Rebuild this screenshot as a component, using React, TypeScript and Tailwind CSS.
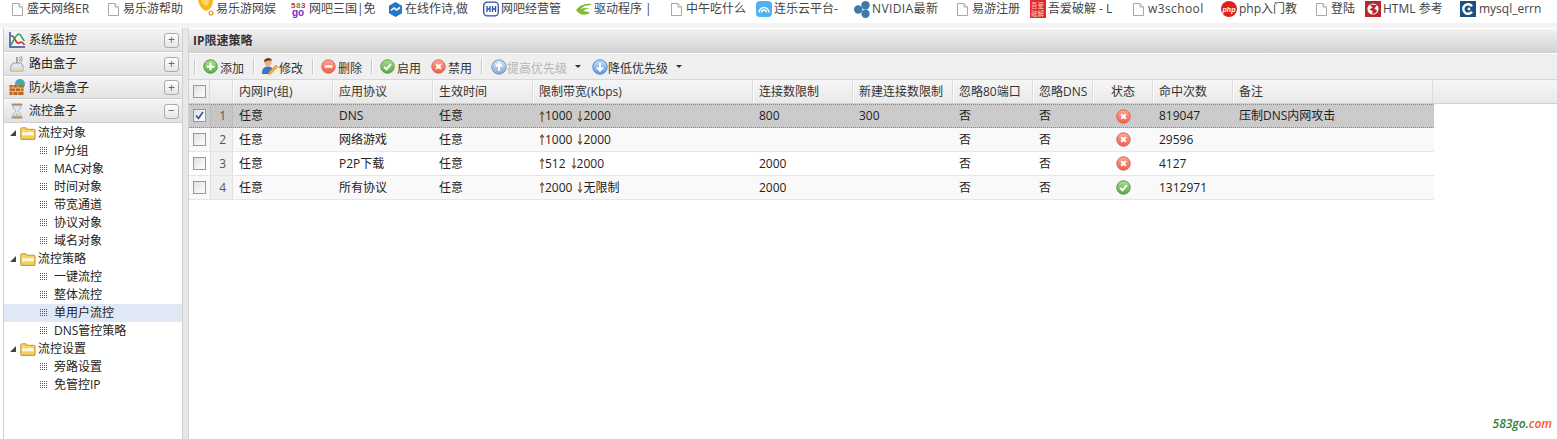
import React from "react";

const FONT = "font-['Open_Sans','Noto_Sans_CJK_SC',sans-serif]";

function Doc() {
  return (
    <svg width="13" height="14" viewBox="0 0 13 14" className="shrink-0">
      <path d="M0.5 1.5H7L10.5 5V13.5H0.5Z" fill="#fff" stroke="#a8a8a8" />
      <path d="M7 1.5V5H10.5" fill="#eee" stroke="#a8a8a8" />
    </svg>
  );
}

function Bell() {
  return (
    <svg width="16" height="16" viewBox="0 0 16 16" className="shrink-0 -mt-[2px]">
      <path d="M0 0H15C15 5 13 9 8 11C5 10 1 6 0 0Z" fill="#f5b81f" />
      <path d="M3 0H11C11 3 10 5 8 6C6 5 4 3 3 0Z" fill="#fbd964" />
      <circle cx="13" cy="13" r="2" fill="#fff" stroke="#e9962a" strokeWidth="1.2" />
    </svg>
  );
}

function Go583() {
  return (
    <svg width="16" height="18" viewBox="0 0 16 18" className="shrink-0">
      <text x="0" y="7.5" fontSize="8" fontFamily="Liberation Sans" fontWeight="700" fill="#e8212a">5</text>
      <text x="5" y="7.5" fontSize="8" fontFamily="Liberation Sans" fontWeight="700" fill="#38a838">8</text>
      <text x="10" y="7.5" fontSize="8" fontFamily="Liberation Sans" fontWeight="700" fill="#e8212a">3</text>
      <text x="1" y="15.5" fontSize="10" fontFamily="Liberation Sans" fontWeight="700" fill="#7a2bd0">go</text>
    </svg>
  );
}

function Diamond() {
  return (
    <svg width="15" height="15" viewBox="0 0 15 15" className="shrink-0">
      <path d="M7.5 0L14 3.7V11.3L7.5 15L1 11.3V3.7Z" fill="#2078c8" />
      <path d="M3 8.5L6 6L8.5 8L12 5.5" fill="none" stroke="#fff" strokeWidth="1.6" />
    </svg>
  );
}

function HH() {
  return (
    <svg width="16" height="16" viewBox="0 0 16 16" className="shrink-0">
      <rect x="0.7" y="1.2" width="14.6" height="13.6" rx="3.5" fill="#fff" stroke="#2f4fa8" strokeWidth="1.3" />
      <path d="M4 5V11M7 5V11M9.5 5V11M12.5 5V11M4 8H7M9.5 8H12.5" stroke="#2f4fa8" strokeWidth="1.3" />
    </svg>
  );
}

function Nvidia() {
  return (
    <svg width="16" height="14" viewBox="0 0 16 14" className="shrink-0">
      <path d="M0 8C4 3 9 1 16 2L13 3.5C9 3 6 5 4.5 8C6.5 6 10 5 13 6.5C10 6.5 8 8 7 9.5C9 9 12 9.5 14 11C9 14 3 13 0 8Z" fill="#84bc30" />
    </svg>
  );
}

function Cloud() {
  return (
    <svg width="16" height="16" viewBox="0 0 16 16" className="shrink-0">
      <rect width="16" height="16" rx="4" fill="#4db2ee" />
      <path d="M3 11.5A5 5 0 0 1 13 11.5" fill="none" stroke="#fff" strokeWidth="1.5" />
      <path d="M5.5 11.5A2.5 2.5 0 0 1 10.5 11.5" fill="none" stroke="#fff" strokeWidth="1.5" />
    </svg>
  );
}

function Hex() {
  return (
    <svg width="16" height="17" viewBox="0 0 16 17" className="shrink-0">
      <circle cx="4.2" cy="8.5" r="4.2" fill="#3d7aa8" />
      <circle cx="11.5" cy="4.2" r="4.2" fill="#3d7aa8" />
      <circle cx="11.5" cy="12.8" r="4.2" fill="#3d7aa8" />
    </svg>
  );
}

function Red52() {
  return (
    <svg width="16" height="18" viewBox="0 0 16 18" className="shrink-0">
      <rect width="16" height="18" fill="#e4282c" />
      <text x="1" y="7.5" fontSize="6.5" fontFamily="Noto Sans CJK SC" fill="#fbc8c0">吾爱</text>
      <text x="1" y="15.5" fontSize="6.5" fontFamily="Noto Sans CJK SC" fill="#fbc8c0">破解</text>
    </svg>
  );
}

function Php() {
  return (
    <svg width="16" height="16" viewBox="0 0 16 16" className="shrink-0">
      <circle cx="8" cy="8" r="8" fill="#e02020" />
      <text x="1.6" y="10.5" fontSize="7" fontStyle="italic" fontWeight="700" fontFamily="Liberation Sans" fill="#fff">php</text>
    </svg>
  );
}

function HtmlLogo() {
  return (
    <svg width="16" height="16" viewBox="0 0 16 16" className="shrink-0">
      <rect width="16" height="16" fill="#b9272c" />
      <circle cx="8" cy="8" r="5.6" fill="#fff" />
      <path d="M4.5 3.5L12 4L9.5 7.5L12 9.5C12 12 9 13 6.5 12.5L8 10.5L4.5 8.5L7.5 6.5Z" fill="#b9272c" />
    </svg>
  );
}

function MysqlLogo() {
  return (
    <svg width="16" height="16" viewBox="0 0 16 16" className="shrink-0">
      <rect width="16" height="16" fill="#1d4f80" />
      <path d="M12 5.2A4.8 4.8 0 1 0 12 10.8" fill="none" stroke="#fff" strokeWidth="2.4" />
      <circle cx="9" cy="8" r="1.4" fill="#fff" />
    </svg>
  );
}

const marks = [
  { w: "w-[96px]", g: "gap-[2px]", c: "", i: <Doc />, t: "盛天网络ER" },
  { w: "w-[90px]", g: "gap-[2px]", c: "", i: <Doc />, t: "易乐游帮助" },
  { w: "w-[93px]", g: "gap-[2px]", c: "", i: <Bell />, t: "易乐游网娱" },
  { w: "w-[97px]", g: "gap-[2px]", c: "", i: <Go583 />, t: "网吧三国|免" },
  { w: "w-[95px]", g: "gap-[2px]", c: "", i: <Diamond />, t: "在线作诗,做" },
  { w: "w-[93px]", g: "gap-[2px]", c: "", i: <HH />, t: "网吧经营管" },
  { w: "w-[95px]", g: "gap-[2px]", c: "", i: <Nvidia />, t: "驱动程序 |" },
  { w: "w-[85px]", g: "gap-[2px]", c: "", i: <Doc />, t: "中午吃什么" },
  { w: "w-[98px]", g: "gap-[2px]", c: "", i: <Cloud />, t: "连乐云平台-" },
  { w: "w-[103px]", g: "gap-[2px]", c: "tracking-[0.4px]", i: <Hex />, t: "NVIDIA最新" },
  { w: "w-[73px]", g: "gap-[2px]", c: "", i: <Doc />, t: "易游注册" },
  { w: "w-[103px]", g: "gap-[2px]", c: "", i: <Red52 />, t: "吾爱破解 - L" },
  { w: "w-[88px]", g: "gap-[2px]", c: "tracking-[0.4px]", i: <Doc />, t: "w3school" },
  { w: "w-[95px]", g: "gap-[2px]", c: "", i: <Php />, t: "php入门教" },
  { w: "w-[49px]", g: "gap-[2px]", c: "", i: <Doc />, t: "登陆" },
  { w: "w-[95px]", g: "gap-[2px]", c: "", i: <HtmlLogo />, t: "HTML 参考" },
  { w: "w-[90px]", g: "gap-[3px]", c: "", i: <MysqlLogo />, t: "mysql_errn" },
];

function Chart() {
  return (
    <svg width="16" height="16" viewBox="0 0 16 16">
      <rect x="1" y="0" width="15" height="15" fill="#eef6fb" />
      <path d="M1 0V15H16" fill="none" stroke="#2f50a0" strokeWidth="1.5" />
      <path d="M2 4C5 2 7 13 10 11C12 10 13 9 15.5 13" fill="none" stroke="#e02828" strokeWidth="1.6" />
      <path d="M2 13C5 8 7 2 10 2C12 2 13 7 15.5 9" fill="none" stroke="#2f9e3a" strokeWidth="1.5" />
    </svg>
  );
}
function Router() {
  return (
    <svg width="16" height="17" viewBox="0 0 16 17">
      <path d="M2 10L4 7H12L14 10V15H1.5Z" fill="#dbe6f5" stroke="#8fa2bf" />
      <rect x="2" y="11.5" width="12" height="3" fill="#f3d9a0" />
      <path d="M8 7V1" stroke="#777" strokeWidth="1.2" />
      <path d="M10 5A2.5 2.5 0 0 0 10 1M12 6A4.5 4.5 0 0 0 12 0" fill="none" stroke="#73b04a" />
    </svg>
  );
}
function Firewall() {
  return (
    <svg width="17" height="17" viewBox="0 0 17 17">
      <circle cx="11" cy="5" r="5" fill="#4d9ed8" />
      <path d="M8 2C11 1 14 3 14 6L10 7Z" fill="#5fb04a" />
      <rect x="0.5" y="6" width="14" height="10" fill="#b8692a" />
      <path d="M0.5 9H14.5M0.5 12.5H14.5M4 6V9M9 6V9M6.5 9V12.5M11.5 9V12.5M4 12.5V16M9 12.5V16" stroke="#e9c48e" strokeWidth="0.9" />
    </svg>
  );
}
function Hourglass() {
  return (
    <svg width="16" height="16" viewBox="0 0 16 16">
      <path d="M4 2H12V5L9 8L12 11V14H4V11L7 8L4 5Z" fill="#d9e6f6" stroke="#a8b9d0" />
      <path d="M5.5 13L8 10L10.5 13Z" fill="#e0b878" />
      <rect x="2.5" y="0.5" width="11" height="2" rx="1" fill="#b88a58" />
      <rect x="2.5" y="13.5" width="11" height="2" rx="1" fill="#b88a58" />
    </svg>
  );
}

const acc = [
  { t: "系统监控", h: "h-[24px]", i: <Chart />, s: "+" },
  { t: "路由盒子", h: "h-[24px]", i: <Router />, s: "+" },
  { t: "防火墙盒子", h: "h-[23px]", i: <Firewall />, s: "+" },
  { t: "流控盒子", h: "h-[24px]", i: <Hourglass />, s: "−" },
];

function Folder() {
  return (
    <svg width="16" height="13" viewBox="0 0 16 13" className="shrink-0">
      <path d="M0.8 11.5V2.5C0.8 1.3 1.5 0.8 2.5 0.8H5.5L7 2.3H13.5C14.3 2.3 15 2.8 15 3.6V11.5C15 12 14.5 12.4 14 12.4H2C1.3 12.4 0.8 12 0.8 11.5Z" fill="#f6d564" stroke="#c39a2c" strokeWidth="1.1" />
      <path d="M2 5.2H13.8V8.6H2Z" fill="#fff8d8" />
      <rect x="2" y="8.6" width="12" height="2.6" fill="#f3cf5e" />
    </svg>
  );
}

function Dots() {
  return (
    <svg width="7" height="7" viewBox="0 0 7 7" className="shrink-0 -mt-[2px]" shapeRendering="crispEdges">
      {[0, 2, 4, 6].flatMap((x) =>
        [0, 2, 4, 6].map((y) => <rect key={x + "-" + y} x={x} y={y} width="1" height="1" fill="#555" />)
      )}
    </svg>
  );
}

function Caret() {
  return (
    <svg width="6" height="6" viewBox="0 0 6 6" className="shrink-0">
      <path d="M6 0V6H0Z" fill="#444" />
    </svg>
  );
}

const tree = [
  { f: "流控对象", c: ["IP分组", "MAC对象", "时间对象", "带宽通道", "协议对象", "域名对象"] },
  { f: "流控策略", c: ["一键流控", "整体流控", "单用户流控", "DNS管控策略"] },
  { f: "流控设置", c: ["旁路设置", "免管控IP"] },
];

function Sidebar() {
  return (
    <aside className="w-[180px] ml-[3px] shrink-0 border-x border-[#cfcfcf] bg-white">
      {acc.map((a) => (
        <div
          key={a.t}
          className={
            a.h +
            " flex items-center bg-gradient-to-b from-[#f4f4f4] to-[#e2e2e2] border-b border-[#cfcfcf] border-t border-t-white text-[#222]"
          }
        >
          <div className="w-[25px] flex justify-center pl-[1px] shrink-0">{a.i}</div>
          <span>{a.t}</span>
          <span className="ml-auto mr-[3px] w-[15px] h-[15px] rounded-[3px] border border-[#aaa] bg-gradient-to-b from-white to-[#e4e4e4] flex items-center justify-center text-[12px] leading-none text-[#666]">
            {a.s}
          </span>
        </div>
      ))}
      <div className="pt-[1px]">
        {tree.map((g) => (
          <div key={g.f}>
            <div className="h-[18px] flex items-center text-[#222] pl-[6px]">
              <Caret />
              <div className="ml-[4px] mr-[2px] flex"><Folder /></div>
              <span>{g.f}</span>
            </div>
            {g.c.map((c) => (
              <div
                key={c}
                className={
                  "h-[18px] flex items-center pl-[36px] gap-[7px] text-[#222] " +
                  (c === "单用户流控" ? "bg-[#e0e8f6]" : "")
                }
              >
                <Dots />
                <span>{c}</span>
              </div>
            ))}
          </div>
        ))}
      </div>
    </aside>
  );
}

function RoundIcon({ kind, size = 15 }: { kind: "add" | "del" | "ok" | "no" | "up" | "down"; size?: number }) {
  const c = {
    add: ["#a8e090", "#55ac44", "#4a9a3a"],
    del: ["#ffa898", "#ee5e4c", "#e0604c"],
    ok: ["#a8e090", "#5aa848", "#4f9a3c"],
    no: ["#ffa898", "#ee5e4c", "#e0604c"],
    up: ["#d8e6f6", "#88a8d0", "#6f94c4"],
    down: ["#c6e2fa", "#5a9ade", "#4a8ad0"],
  }[kind];
  const id = "g-" + kind;
  return (
    <svg width={size} height={size} viewBox="0 0 16 16" className="shrink-0">
      <defs>
        <linearGradient id={id} x1="0" y1="0" x2="0" y2="1">
          <stop offset="0" stopColor={c[0]} />
          <stop offset="1" stopColor={c[1]} />
        </linearGradient>
      </defs>
      <circle cx="8" cy="8" r="7.2" fill={"url(#" + id + ")"} stroke={c[2]} strokeWidth="1" />
      {kind === "add" && <path d="M8 4V12M4 8H12" stroke="#fff" strokeWidth="2.4" />}
      {kind === "del" && <path d="M4 8H12" stroke="#fff" strokeWidth="2.6" />}
      {kind === "ok" && <path d="M4.5 8.5L7 11L11.5 5.5" fill="none" stroke="#fff" strokeWidth="2.2" />}
      {kind === "no" && <path d="M5.5 5.5L10.5 10.5M10.5 5.5L5.5 10.5" stroke="#fff" strokeWidth="2.2" />}
      {(kind === "up" || kind === "down") && (
        <path d={kind === "up" ? "M8 12V5M5 7.5L8 4.5L11 7.5" : "M8 4V11M5 8.5L8 11.5L11 8.5"} fill="none" stroke="#fff" strokeWidth="2" />
      )}
    </svg>
  );
}

function Pencil() {
  return (
    <svg width="17" height="17" viewBox="0 0 17 17" className="shrink-0">
      <circle cx="7" cy="4.5" r="3.5" fill="#e9b27c" />
      <path d="M3 4C3 1 5 0 7.5 0C10 0 11 2 11 3C9 2 6 3 3 4Z" fill="#6a3f1c" />
      <path d="M1 15C1 10 4 8.5 7 8.5C10 8.5 12 10 12 12L8 16H1Z" fill="#3f73c4" />
      <path d="M8 14L15 7L16.8 8.8L9.8 15.8L7.5 16.3Z" fill="#f0b83a" stroke="#b87a18" strokeWidth="0.6" />
    </svg>
  );
}

function Sep({ className = "" }: { className?: string }) {
  return <span className={"w-[2px] h-[15px] bg-[#c8c8c8] border-r border-white shrink-0 " + className} />;
}

function Menu({ className = "" }: { className?: string }) {
  return <span className={"w-0 h-0 border-x-[3px] border-x-transparent border-t-[3px] shrink-0 border-t-[#333] " + className} />;
}

function Tool({ icon, label, className, gap = "gap-[2px]", text = "" }: { icon: React.ReactNode; label: string; className: string; gap?: string; text?: string }) {
  return (
    <div className={"flex items-center shrink-0 " + gap + " " + className}>
      {icon}
      <span className={"mt-[4px] " + text}>{label}</span>
    </div>
  );
}

function Toolbar() {
  return (
    <div className="h-[27px] flex items-center bg-[#efefef] border-b border-[#d6d6d6] border-t border-t-white pl-[5px] text-[#333]">
      <Sep />
      <Tool className="ml-[7px]" icon={<RoundIcon kind="add" />} label="添加" />
      <Sep className="ml-[9px]" />
      <Tool className="ml-[6px]" gap="gap-[1px]" icon={<Pencil />} label="修改" />
      <Sep className="ml-[9px]" />
      <Tool className="ml-[7px]" icon={<RoundIcon kind="del" />} label="删除" />
      <Sep className="ml-[9px]" />
      <Tool className="ml-[7px]" icon={<RoundIcon kind="ok" />} label="启用" />
      <Tool className="ml-[10px]" icon={<RoundIcon kind="no" />} label="禁用" />
      <Sep className="ml-[9px]" />
      <Tool className="ml-[8px]" gap="gap-0" text="text-[#b5b5b5]" icon={<RoundIcon kind="up" size={16} />} label="提高优先级" />
      <Menu className="ml-[8px]" />
      <Tool className="ml-[11px]" gap="gap-0" icon={<RoundIcon kind="down" size={16} />} label="降低优先级" />
      <Menu className="ml-[8px]" />
    </div>
  );
}

const cols = "grid grid-cols-[21px_23px_100px_100px_100px_220px_100px_100px_80px_60px_60px_80px_200px]";
const heads = ["内网IP(组)", "应用协议", "生效时间", "限制带宽(Kbps)", "连接数限制", "新建连接数限制", "忽略80端口", "忽略DNS", "状态", "命中次数", "备注"];

const rows = [
  { ck: true, n: 1, app: "DNS", up: "1000", down: "2000", c: "800", nc: "300", s: "no", h: "819047", note: "压制DNS内网攻击" },
  { ck: false, n: 2, app: "网络游戏", up: "1000", down: "2000", c: "", nc: "", s: "no", h: "29596", note: "" },
  { ck: false, n: 3, app: "P2P下载", up: "512", down: "2000", c: "2000", nc: "", s: "no", h: "4127", note: "" },
  { ck: false, n: 4, app: "所有协议", up: "2000", down: "无限制", c: "2000", nc: "", s: "ok", h: "1312971", note: "" },
] as const;

function Check({ on }: { on: boolean }) {
  return (
    <span className="w-[13px] h-[13px] border border-[#999] bg-gradient-to-br from-[#e0e0e0] to-white flex items-center justify-center shrink-0">
      {on && (
        <svg width="9" height="9" viewBox="0 0 9 9">
          <path d="M1 4.5L3.5 7.5L8 1" fill="none" stroke="#3a4ea8" strokeWidth="1.6" />
        </svg>
      )}
    </span>
  );
}

function Arrow({ up }: { up: boolean }) {
  return (
    <svg width="6" height="11" viewBox="0 0 6 11" className="shrink-0">
      <path
        d={up ? "M3 1V11M1 3.5L3 1L5 3.5" : "M3 0V10M1 7.5L3 10L5 7.5"}
        fill="none"
        stroke="#6a4a28"
        strokeWidth="1.1"
      />
    </svg>
  );
}

function Cell({ children, className = "" }: { children?: React.ReactNode; className?: string }) {
  return <div className={"flex items-center pl-[6px] whitespace-nowrap overflow-hidden " + className}>{children}</div>;
}

function Table() {
  return (
    <div className="w-[1368px]">
      <div className="h-[24px] bg-gradient-to-b from-[#f6f6f6] to-[#e9e9e9] border-b border-[#cfcfcf] text-[#333]">
        <div className={cols + " h-[23px]"}>
          <div className="flex items-center pl-[4px] border-r border-[#dcdcdc]"><Check on={false} /></div>
          <div className="border-r border-[#dcdcdc]" />
          {heads.map((h) => (
            <div
              key={h}
              className={"flex items-center border-r border-[#dcdcdc] border-l border-l-white whitespace-nowrap " + (h === "状态" ? "justify-center" : "pl-[5px]")}
            >
              {h}
            </div>
          ))}
        </div>
      </div>
      {rows.map((r) => (
        <div
          key={r.n}
          className={
            cols +
            " w-[1245px] h-[24px] text-[#222] border-b " +
            (r.ck
              ? "bg-[#cbcbcb] border-dotted border-[#8a8a8a] border-t"
              : r.n === 3
              ? "bg-white border-[#e6e6e6]"
              : "bg-[#f9f9f9] border-[#e6e6e6]")
          }
        >
          <div className="flex items-center pl-[4px] pb-[1px]"><Check on={r.ck} /></div>
          <div className={"flex items-center justify-end pr-[6px] border-x text-[#555] " + (r.ck ? "bg-[#c6c6c6] border-[#bbb]" : "bg-[#f0f0f0] border-[#e0e0e0]")}>{r.n}</div>
          <Cell>任意</Cell>
          <Cell>{r.app}</Cell>
          <Cell>任意</Cell>
          <Cell>
            <Arrow up />
            <span>{r.up}</span>
            <span className="ml-[5px] flex"><Arrow up={false} /></span>
            <span>{r.down}</span>
          </Cell>
          <Cell>{r.c}</Cell>
          <Cell>{r.nc}</Cell>
          <Cell>否</Cell>
          <Cell>否</Cell>
          <div className="flex items-center justify-center"><RoundIcon kind={r.s} /></div>
          <Cell>{r.h}</Cell>
          <Cell>{r.note}</Cell>
        </div>
      ))}
    </div>
  );
}

export default function App() {
  return (
    <div className={"w-[1557px] h-[439px] overflow-hidden bg-white flex flex-col text-[12px] leading-none " + FONT}>
      <div className="h-[23px] flex items-center pl-[12px] pb-[5px] text-[#444] shrink-0 overflow-hidden">
        {marks.map((m) => (
          <div key={m.t} className={"flex items-center shrink-0 whitespace-nowrap " + m.w + " " + m.g}>
            {m.i}
            <span className={m.c}>{m.t}</span>
          </div>
        ))}
      </div>
      <div className="h-[5px] bg-[#f3f3f3] shrink-0" />
      <div className="flex flex-1 min-h-0">
        <Sidebar />
        <div className="w-[5px] bg-[#e8e8e8] shrink-0" />
        <main className="flex-1 min-w-0 relative border-l border-[#d4d4d4]">
          <div className="h-[25px] flex items-center pl-[4px] font-bold text-[#333] bg-gradient-to-b from-[#f2f2f2] to-[#d2d2d2] border-t border-white">
            IP限速策略
          </div>
          <Toolbar />
          <Table />
          <div className="absolute right-[5px] bottom-[9px] text-[12px] italic font-semibold">
            <span className="text-[#2e7d32]">583go.</span>
            <span className="text-[#f0592a]">com</span>
          </div>
        </main>
      </div>
    </div>
  );
}
